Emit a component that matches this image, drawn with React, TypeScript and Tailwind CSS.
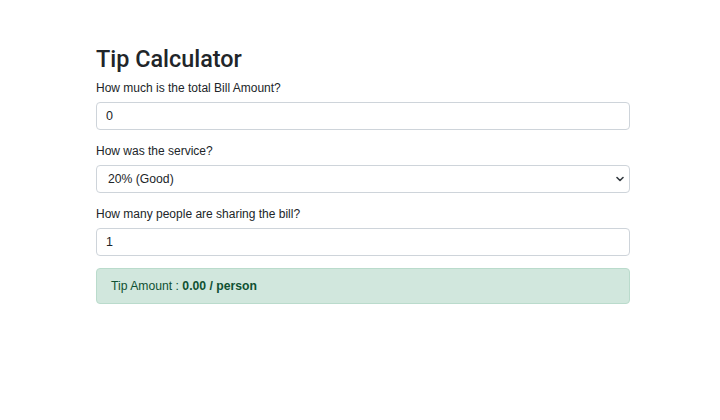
import React from "react";

export default function App() {
  return (
    <div
      className="w-[720px] h-[420px] bg-white text-[#212529]"
      style={{ fontFamily: '"Liberation Sans", Arial, sans-serif' }}
    >
      <div className="ml-[96px] w-[534px] pt-[44px]">
        <h1
          className="text-[23.4px] leading-[31px] font-medium mb-[3px]"
          style={{ fontFamily: 'Roboto, "Liberation Sans", Arial, sans-serif' }}
        >
          Tip Calculator
        </h1>

        <label className="block text-[12px] leading-[20px] mb-[4px]">How much is the total Bill Amount?</label>
        <input
          type="text"
          defaultValue="0"
          className="block w-full h-[28px] px-[9px] text-[12.5px] border border-[#ced4da] rounded-[4px] text-[#212529] outline-none mb-[11px]"
        />

        <label className="block text-[12px] leading-[20px] mb-[4px]">How was the service?</label>
        <div className="relative mb-[11px]">
          <div className="flex items-center w-full h-[28px] pl-[11px] pr-[9px] text-[12.2px] border border-[#ced4da] rounded-[4px] bg-white">
            20% (Good)
          </div>
          <svg
            className="absolute right-[6px] top-[11px]"
            width="8"
            height="6"
            viewBox="0 0 8 6"
            fill="none"
          >
            <path d="M1 1.5 L4 4.5 L7 1.5" stroke="#343a40" strokeWidth="1.6" strokeLinecap="round" strokeLinejoin="round" />
          </svg>
        </div>

        <label className="block text-[12px] leading-[20px] mb-[4px]">How many people are sharing the bill?</label>
        <input
          type="text"
          defaultValue="1"
          className="block w-full h-[28px] px-[9px] text-[12.5px] border border-[#ced4da] rounded-[4px] text-[#212529] outline-none mb-[12px]"
        />

        <div className="flex items-center h-[36px] px-[14px] text-[12.2px] bg-[#d1e7dd] border border-[#badbcc] rounded-[4px] text-[#0f5132]">
          <span>Tip Amount :&nbsp;</span>
          <b className="font-bold">0.00 / person</b>
        </div>
      </div>
    </div>
  );
}
